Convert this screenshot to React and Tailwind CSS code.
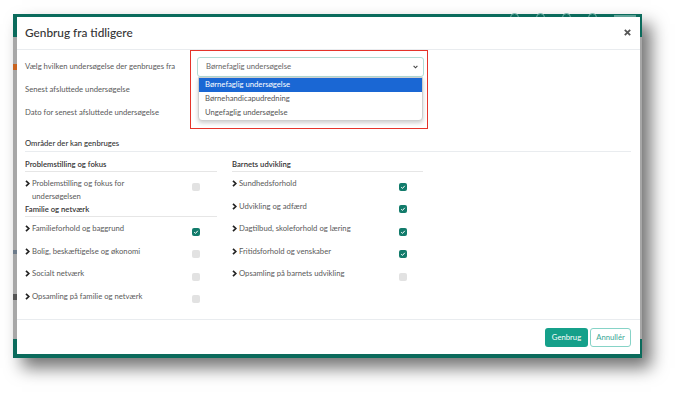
import React from "react";

const F = { fontFamily: "Lato, 'Open Sans', sans-serif" };

function Chevron() {
  return (
    <svg width="5" height="7" viewBox="0 0 5 7" className="shrink-0 mt-[3px]">
      <polyline points="1,0.8 3.8,3.5 1,6.2" fill="none" stroke="#222" strokeWidth="1.7" />
    </svg>
  );
}

function Box({ checked }) {
  if (checked) {
    return (
      <div className="w-[8px] h-[8px] rounded-[2px] bg-[#127b6b] flex items-center justify-center shrink-0 mt-[5.5px] mb-[-2px]">
        <svg width="6" height="6" viewBox="0 0 6 6">
          <polyline points="1.2,3.2 2.5,4.4 4.8,1.8" fill="none" stroke="#fff" strokeWidth="1" />
        </svg>
      </div>
    );
  }
  return <div className="w-[8px] h-[8px] rounded-[2px] bg-[#e2e2e2] shrink-0 mt-[5.5px] mb-[-2px]" />;
}

function Item({ label, checked, pb = "pb-[5px]" }) {
  return (
    <div className={`flex items-start pt-[5px] ${pb}`}>
      <div className="w-[135px] flex items-start gap-[2px] text-[7.7px] leading-[12.5px] text-[#5a5a5a]">
        <Chevron />
        <span>{label}</span>
      </div>
      <div className="ml-[32px]">
        <Box checked={checked} />
      </div>
    </div>
  );
}

function Heading({ children }) {
  return (
    <div className="h-[14px] border-b border-[#e6e6e6] text-[7.7px] leading-[12px] font-semibold text-[#333]">
      {children}
    </div>
  );
}

export default function App() {
  return (
    <div className="w-[677px] h-[394px] bg-white overflow-hidden" style={F}>
      <div className="ml-[13px] mt-[14px] w-[629px] h-[344px] relative shadow-[9px_10px_16px_rgba(0,0,0,0.55)] flex flex-col">
        <div className="h-[23px] bg-[#0b6b5c] flex justify-end items-start gap-[17px] pr-[6px]">
          <div className="w-[9px] h-[9px] rounded-full border border-[#6fb0a5] mt-[-1px]" />
          <div className="w-[9px] h-[9px] rounded-full border border-[#6fb0a5] mt-[-1px]" />
          <div className="w-[9px] h-[9px] rounded-full border border-[#6fb0a5] mt-[-1px]" />
          <div className="w-[9px] h-[9px] rounded-full border border-[#6fb0a5] mt-[-1px]" />
          <div className="w-[22px] h-[3px] bg-[#5fa398] mt-[1px]" />
        </div>
        <div className="flex-1 bg-[#a7a7a7] flex flex-col">
          <div className="w-[4px] h-[6px] bg-[#c8631f] mt-[27px]" />
          <div className="w-[4px] h-[4px] bg-[#6d7b8a] mt-[180px]" />
          <div className="w-[4px] h-[6px] bg-[#555] mt-[40px]" />
        </div>
        <div className="h-[19px] bg-[#0b6b5c]" />

        <div className="absolute left-[4px] top-[3px] right-[2px] bottom-[4px] bg-white flex flex-col">
          <div className="h-[33px] border-b border-[#e9ecef] flex items-center justify-between pl-[8px] pr-[9px]">
            <div className="text-[11.8px] text-[#333] font-medium">Genbrug fra tidligere</div>
            <svg width="7" height="7" viewBox="0 0 7 7" className="mt-[-1px]">
              <line x1="0.8" y1="0.8" x2="6.2" y2="6.2" stroke="#555" strokeWidth="1.8" />
              <line x1="6.2" y1="0.8" x2="0.8" y2="6.2" stroke="#555" strokeWidth="1.8" />
            </svg>
          </div>

          <div className="flex-1 flex flex-col pl-[8px] pr-[9px] pt-[7px]">
            <div className="grid grid-cols-[172px_227px] gap-y-[3px] text-[7.7px] text-[#5a5a5a]">
              <div className="h-[20px] flex items-center">Vælg hvilken undersøgelse der genbruges fra</div>
              <div className="relative h-[20px]">
                <div className="h-[20px] border border-[#b3dcd6] rounded-[3px] flex items-center justify-between pl-[8px] pr-[5px] text-[#666]">
                  <span>Børnefaglig undersøgelse</span>
                  <svg width="5" height="4" viewBox="0 0 5 4">
                    <polyline points="0.6,0.8 2.5,2.8 4.4,0.8" fill="none" stroke="#444" strokeWidth="1.1" />
                  </svg>
                </div>
                <div className="absolute left-[1px] right-[1px] top-[20px] bg-white border border-[#cfcfcf] rounded-b-[4px] shadow-[0_2px_4px_rgba(0,0,0,0.2)] z-10">
                  <div className="h-[14px] bg-[#1a67d4] text-white flex items-center pl-[6px]">Børnefaglig undersøgelse</div>
                  <div className="h-[14px] text-[#555] flex items-center pl-[6px]">Børnehandicapudredning</div>
                  <div className="h-[14px] text-[#555] flex items-center pl-[6px]">Ungefaglig undersøgelse</div>
                </div>
                <div className="absolute left-[-7px] top-[-7px] w-[238px] h-[79px] border-[1.5px] border-[#e5332a] z-20 pointer-events-none" />
              </div>
              <div className="h-[20px] flex items-center">Senest afsluttede undersøgelse</div>
              <div className="h-[20px]" />
              <div className="h-[20px] flex items-center">Dato for senest afsluttede undersøgelse</div>
              <div className="h-[20px]" />
            </div>

            <div className="mt-[14px] h-[15px] border-b border-[#e9ecef] text-[7.7px] leading-[13px] font-medium text-[#333]">
              Områder der kan genbruges
            </div>

            <div className="flex gap-[15px] mt-[6px]">
              <div className="w-[192px] flex flex-col">
                <Heading>Problemstilling og fokus</Heading>
                <Item label="Problemstilling og fokus for undersøgelsen" pb="pb-[1px]" />
                <Heading>Familie og netværk</Heading>
                <Item label="Familieforhold og baggrund" checked />
                <Item label="Bolig, beskæftigelse og økonomi" />
                <Item label="Socialt netværk" />
                <Item label="Opsamling på familie og netværk" />
              </div>
              <div className="w-[191px] flex flex-col">
                <Heading>Barnets udvikling</Heading>
                <Item label="Sundhedsforhold" checked />
                <Item label="Udvikling og adfærd" checked />
                <Item label="Dagtilbud, skoleforhold og læring" checked />
                <Item label="Fritidsforhold og venskaber" checked />
                <Item label="Opsamling på barnets udvikling" />
              </div>
            </div>
          </div>

          <div className="border-t border-[#e9ecef] flex justify-end gap-[2px] pt-[8px] pb-[7px] pr-[9px]">
            <div className="w-[43px] h-[19px] rounded-[3px] bg-[#15a08a] text-white text-[7.7px] flex items-center justify-center">Genbrug</div>
            <div className="w-[41px] h-[19px] rounded-[3px] border border-[#86d3c7] text-[#3aa895] text-[7.7px] flex items-center justify-center">Annullér</div>
          </div>
        </div>
      </div>
    </div>
  );
}
